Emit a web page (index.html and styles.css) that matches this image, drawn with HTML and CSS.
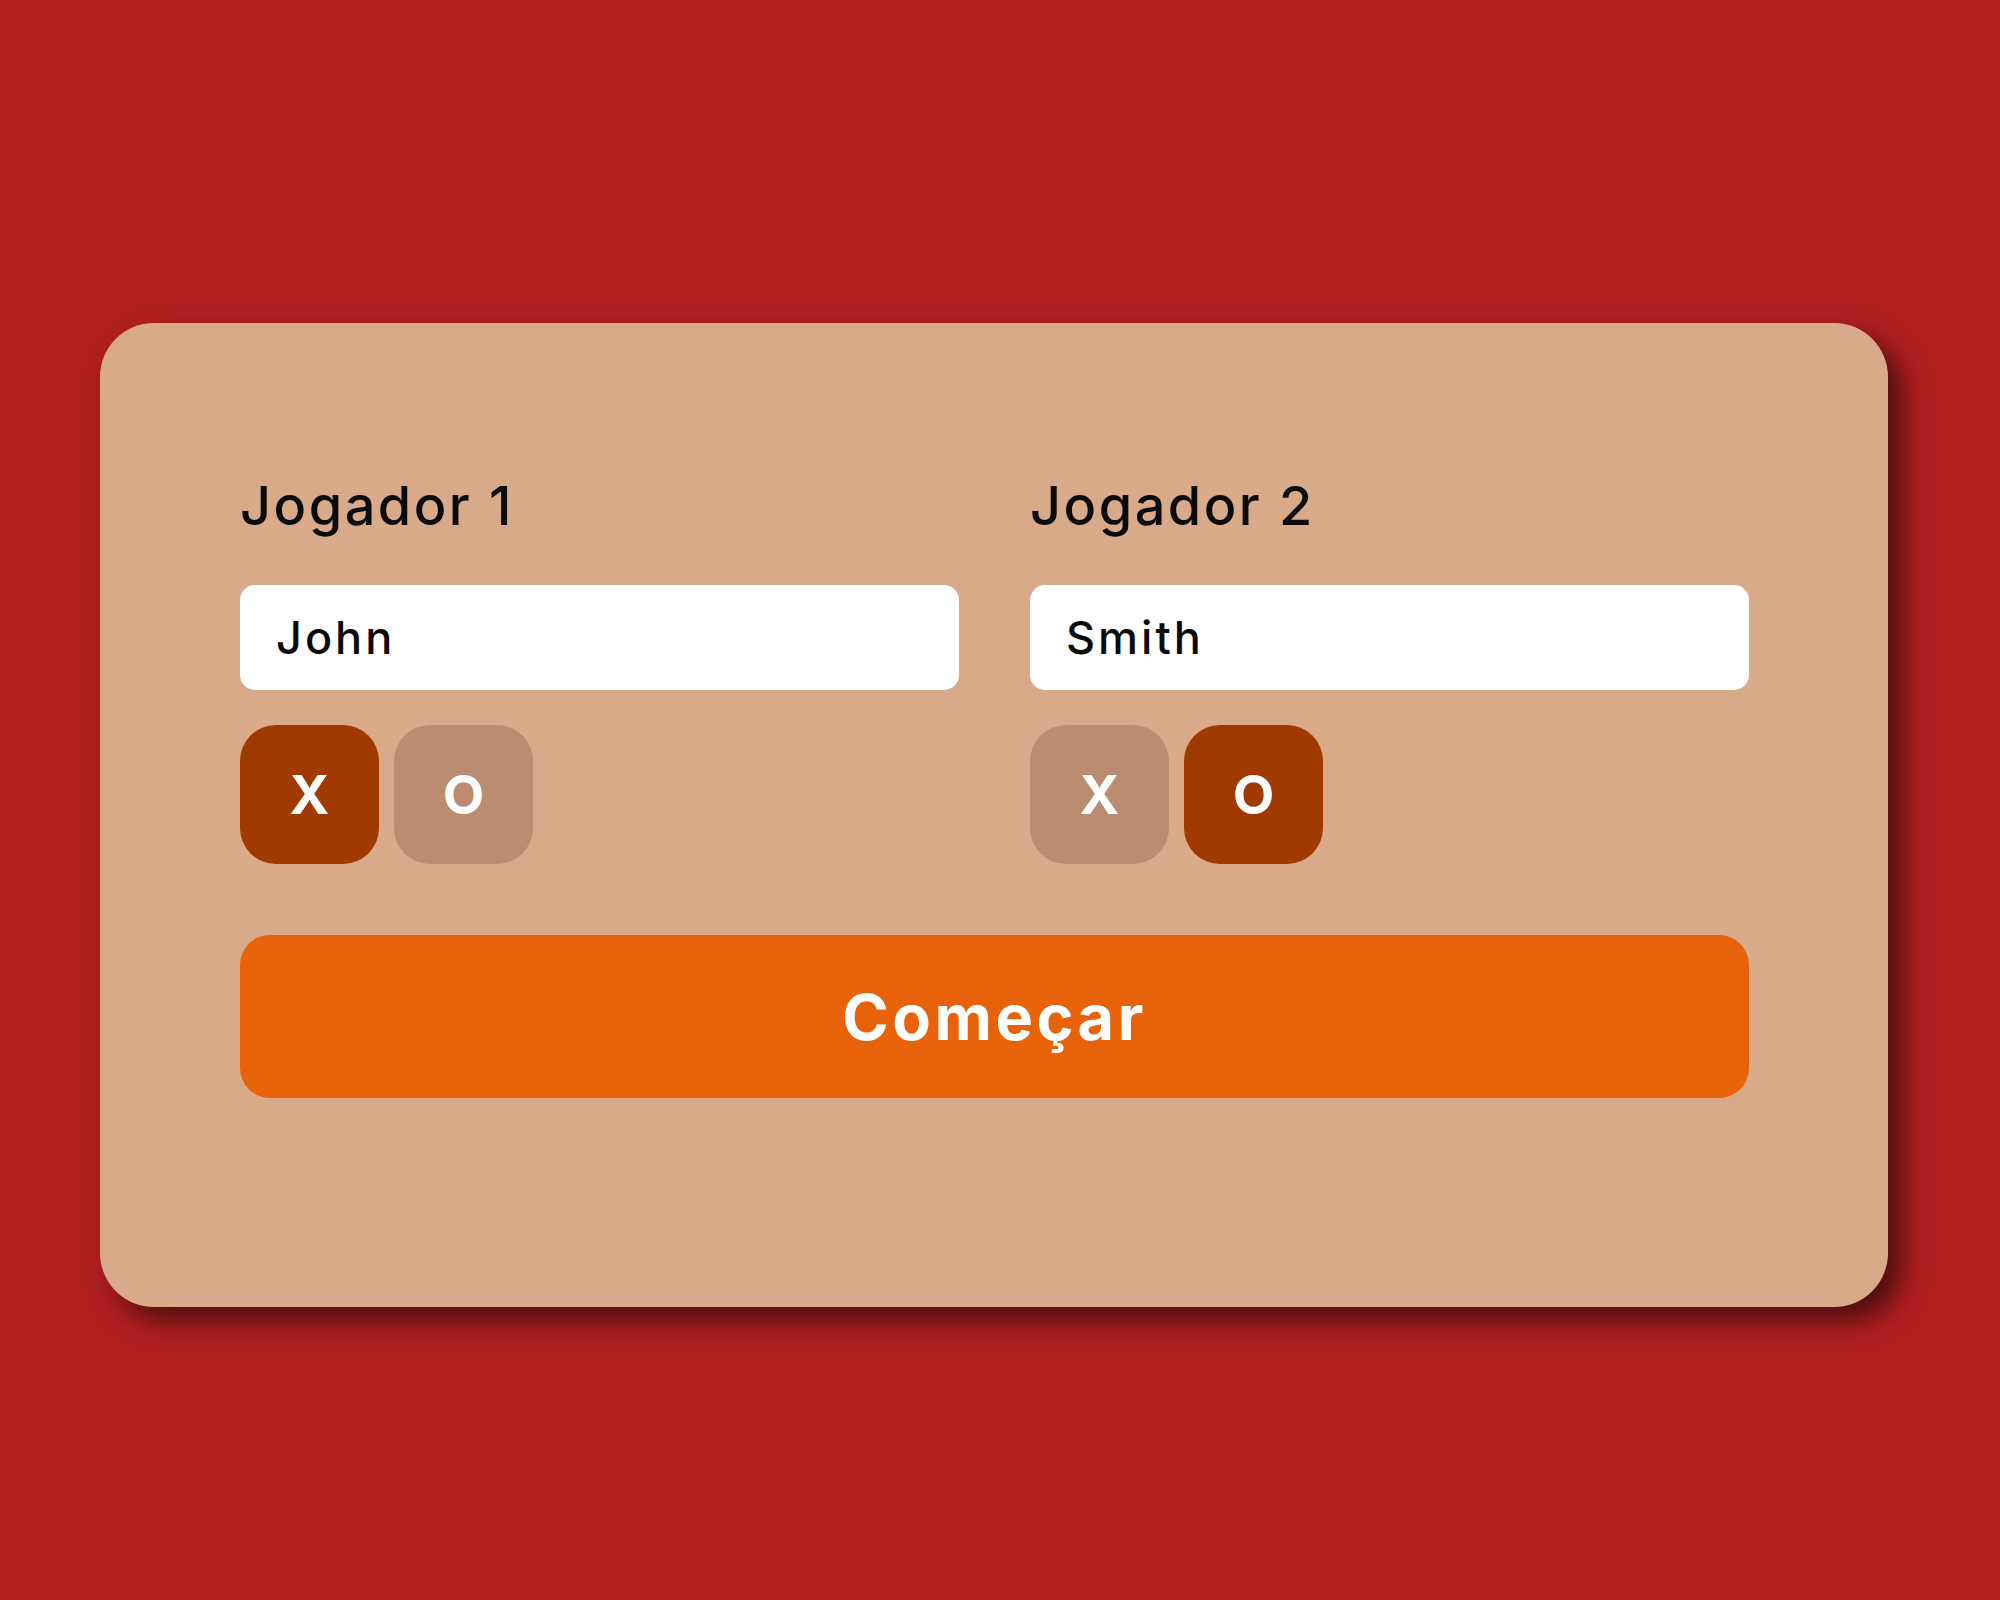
FILE: index.html
```html
<!DOCTYPE html>
<html lang="pt">
<head>
<meta charset="utf-8">
<title>Jogo da Velha</title>
<link rel="stylesheet" href="styles.css">
</head>
<body>
<main class="page">
  <section class="card">
    <div class="players">
      <div class="player">
        <label class="player-label" for="p1">Jogador 1</label>
        <input class="player-input" id="p1" type="text" value="John">
        <div class="toggles">
          <button class="toggle selected">X</button>
          <button class="toggle">O</button>
        </div>
      </div>
      <div class="player">
        <label class="player-label" for="p2">Jogador 2</label>
        <input class="player-input" id="p2" type="text" value="Smith">
        <div class="toggles">
          <button class="toggle">X</button>
          <button class="toggle selected">O</button>
        </div>
      </div>
    </div>
    <button class="start">Começar</button>
  </section>
</main>
</body>
</html>
```

FILE: styles.css
```css
* { box-sizing: border-box; }

html, body {
  margin: 0;
  padding: 0;
  background: #b11e20;
  font-family: Inter, "Noto Sans", sans-serif;
}

.page {
  width: 2000px;
  height: 1600px;
  padding: 323px 0 0 100px;
}

.card {
  width: 1788px;
  height: 984px;
  background: #d8aa89;
  border-radius: 54px;
  padding: 152px 139px 0 140px;
  box-shadow: 14px 14px 26px rgba(0, 0, 0, 0.55);
}

.players {
  display: grid;
  grid-template-columns: 1fr 1fr;
  column-gap: 71px;
}

.player {
  display: flex;
  flex-direction: column;
}

.player-label {
  font-size: 54px;
  line-height: 62px;
  font-weight: 500;
  color: #0a0a0a;
  letter-spacing: 2.5px;
}

.player-input {
  margin-top: 48px;
  height: 105px;
  border: none;
  outline: none;
  border-radius: 15px;
  background: #fff;
  padding: 0 36px;
  font-family: inherit;
  font-size: 45px;
  font-weight: 500;
  letter-spacing: 3px;
  color: #0a0a0a;
  width: 100%;
}

.toggles {
  margin-top: 35px;
  display: flex;
  gap: 15px;
}

.toggle {
  width: 139px;
  height: 139px;
  border: none;
  border-radius: 36px;
  background: #bb8c70;
  color: #fff;
  font-family: inherit;
  font-size: 54px;
  font-weight: 700;
  padding: 0;
  display: flex;
  align-items: center;
  justify-content: center;
}

.toggle.selected {
  background: #a03a00;
}

.start {
  margin-top: 71px;
  width: 100%;
  height: 163px;
  border: none;
  border-radius: 30px;
  background: #e8620a;
  color: #fff;
  font-family: inherit;
  font-size: 63px;
  font-weight: 700;
  letter-spacing: 3.5px;
  padding: 0;
  display: block;
}
```
